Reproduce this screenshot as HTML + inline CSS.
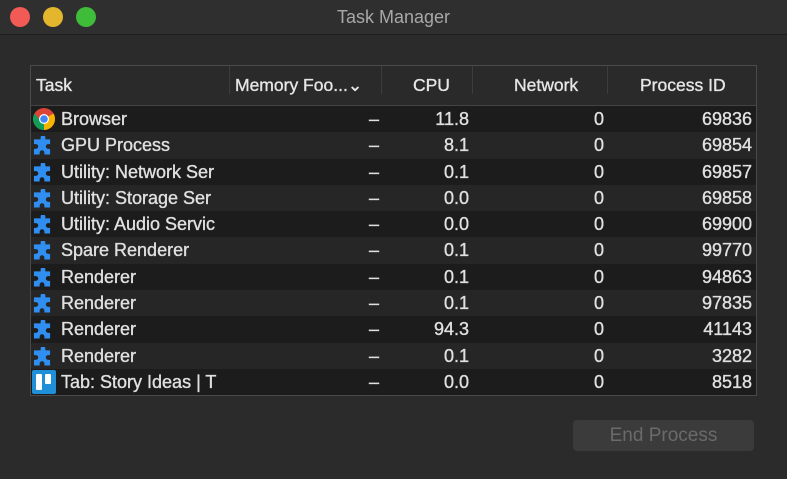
<!DOCTYPE html>
<html><head><style>
body{margin:0;width:787px;height:479px;background:#2b2b2b;font-family:"Liberation Sans",sans-serif;overflow:hidden;position:relative;color:#dcdcdc}
.tb{position:absolute;left:0;top:0;width:787px;height:34px;background:#2f2f2f;border-bottom:1px solid #1e1e1e}
.dot{position:absolute;top:7px;width:20px;height:20px;border-radius:50%}
.title{position:absolute;top:7px;left:0;width:787px;text-align:center;font-size:18px;color:#a8a8a8}
.tbl{position:absolute;left:30px;top:65px;width:725px;height:329px;border:1px solid #4a4a4a;background:#262626;-webkit-text-stroke:0.35px currentColor}
.hd{height:39px;border-bottom:1px solid #444;position:relative;background:#2a2a2a}
.hd div{position:absolute;top:0;height:39px;line-height:39px;font-size:17.5px;color:#e6e6e6}
.sep{position:absolute;top:6px;width:1px;height:28px!important;background:#3c3c3c}
.row{height:26.3px;position:relative;font-size:18px;color:#e0e0e0}
.row:nth-child(odd){background:#1c1c1c}
.row span{position:absolute;top:0;line-height:26px}
.n{left:30px;width:167px;overflow:hidden;white-space:nowrap}
.m{right:377px}
.c{right:287px}
.w{right:152px}
.p{right:4px}
.ic{left:3px;top:4px!important;width:18px;height:18px}
.btn{position:absolute;left:573px;top:420px;width:181px;height:31px;background:#3b3b3b;border-radius:4px;color:#6a6a6a;font-size:19px;text-align:center;line-height:31px}
</style></head><body>
<div class="tb">
<div class="dot" style="left:10px;background:#f25a55"></div>
<div class="dot" style="left:43px;background:#e3b62d"></div>
<div class="dot" style="left:76px;background:#3fbc3a"></div>
<div class="title">Task Manager</div>
</div>
<div class="tbl">
<div class="hd">
<div style="left:5px">Task</div>
<div class="sep" style="left:198px"></div>
<div style="left:204px">Memory Foo...⌄</div>
<div class="sep" style="left:350px"></div>
<div style="left:382px">CPU</div>
<div class="sep" style="left:441px"></div>
<div style="left:483px">Network</div>
<div class="sep" style="left:576px"></div>
<div style="left:609px">Process ID</div>
</div>
<div>
<div class="row"><span class="ic"><svg width="22" height="22" viewBox="0 0 22 22" style="margin-left:-1px;margin-top:-2px"><circle cx="11" cy="11" r="11" fill="#db4437"/><path d="M11 11 L1.5 16.5 A11 11 0 0 0 11 22 Z" fill="#0f9d58"/><path d="M11 11 L11 22 A11 11 0 0 0 20.5 5.5 Z" fill="#f4b400"/><path d="M11 11 L1.5 16.5 A11 11 0 0 1 1.5 5.5 L6 11Z" fill="#0f9d58"/><circle cx="11" cy="11" r="5" fill="#fff"/><circle cx="11" cy="11" r="3.8" fill="#4285f4"/></svg></span><span class="n">Browser</span><span class="m">–</span><span class="c">11.8</span><span class="w">0</span><span class="p">69836</span></div>
<div class="row"><span class="ic pz"></span><span class="n">GPU Process</span><span class="m">–</span><span class="c">8.1</span><span class="w">0</span><span class="p">69854</span></div>
<div class="row"><span class="ic pz"></span><span class="n">Utility: Network Ser</span><span class="m">–</span><span class="c">0.1</span><span class="w">0</span><span class="p">69857</span></div>
<div class="row"><span class="ic pz"></span><span class="n">Utility: Storage Ser</span><span class="m">–</span><span class="c">0.0</span><span class="w">0</span><span class="p">69858</span></div>
<div class="row"><span class="ic pz"></span><span class="n">Utility: Audio Servic</span><span class="m">–</span><span class="c">0.0</span><span class="w">0</span><span class="p">69900</span></div>
<div class="row"><span class="ic pz"></span><span class="n">Spare Renderer</span><span class="m">–</span><span class="c">0.1</span><span class="w">0</span><span class="p">99770</span></div>
<div class="row"><span class="ic pz"></span><span class="n">Renderer</span><span class="m">–</span><span class="c">0.1</span><span class="w">0</span><span class="p">94863</span></div>
<div class="row"><span class="ic pz"></span><span class="n">Renderer</span><span class="m">–</span><span class="c">0.1</span><span class="w">0</span><span class="p">97835</span></div>
<div class="row"><span class="ic pz"></span><span class="n">Renderer</span><span class="m">–</span><span class="c">94.3</span><span class="w">0</span><span class="p">41143</span></div>
<div class="row"><span class="ic pz"></span><span class="n">Renderer</span><span class="m">–</span><span class="c">0.1</span><span class="w">0</span><span class="p">3282</span></div>
<div class="row"><span class="ic"><svg width="24" height="24" viewBox="0 0 24 24" style="margin-left:-2px;margin-top:-3px"><rect width="24" height="24" rx="2" fill="#1f8fd8"/><rect x="4" y="4" width="6" height="16" rx="1" fill="#fff"/><rect x="13" y="4" width="6" height="10" rx="1" fill="#fff"/></svg></span><span class="n">Tab: Story Ideas | T</span><span class="m">–</span><span class="c">0.0</span><span class="w">0</span><span class="p">8518</span></div>
</div>
</div>
<div class="btn">End Process</div>
<script>
document.querySelectorAll('.pz').forEach(e=>e.innerHTML='<svg width="20" height="20" viewBox="0 0 20 20" style="margin-left:-1px"><path d="M8 1a2.5 2.5 0 0 1 5 0v2h5v5h-2a2.5 2.5 0 0 0 0 5h2v6h-6v-2a2.5 2.5 0 0 0-5 0v2H1v-6h2a2.5 2.5 0 0 0 0-5H1V3h7z" fill="#2f8ef0" transform="translate(0 0.5) scale(0.95)"/></svg>');
</script>
</body></html>
